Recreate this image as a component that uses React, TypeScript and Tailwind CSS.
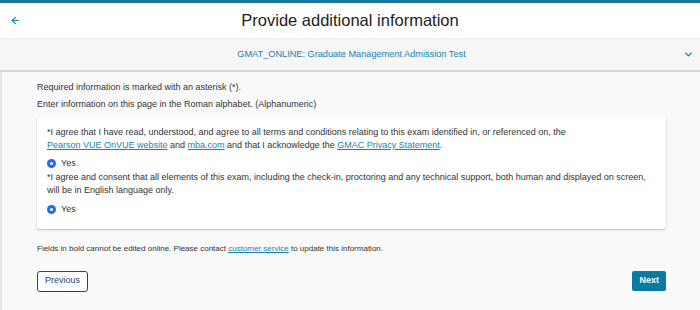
import { ArrowLeft, ChevronDown } from 'lucide-react';

function Radio({ label }: { label: string }) {
  return (
    <label className="flex h-[14px] items-center gap-[5px] text-[9px] text-[#333]">
      <span className="flex h-[9px] w-[9px] items-center justify-center rounded-full bg-[#1e6fe0]">
        <span className="h-[3px] w-[3px] rounded-full bg-white" />
      </span>
      {label}
    </label>
  );
}

function Link({ children }: { children: string }) {
  return <a className="text-[#1583b0] underline">{children}</a>;
}

export default function App() {
  return (
    <div
      className="flex h-[310px] w-[700px] flex-col overflow-hidden border-t-[3px] border-[#17789f] bg-[#fafafa]"
      style={{ fontFamily: '"Liberation Sans", Arial, sans-serif' }}
    >
      <div className="flex h-[36px] items-center border-b border-[#ececec] bg-white px-[10px]">
        <ArrowLeft className="h-[11px] w-[11px] text-[#1a86b3]" strokeWidth={2.5} />
        <h1 className="flex-1 pr-[11px] text-center text-[16.5px] text-[#222]">Provide additional information</h1>
      </div>
      <div className="flex h-[33px] items-center border-b-2 border-[#d6d6d6] bg-[#f6f6f6] pl-[20px] pr-[6px]">
        <span className="flex-1 text-center text-[9.2px] text-[#1583b0]">
          GMAT_ONLINE: Graduate Management Admission Test
        </span>
        <ChevronDown className="h-[11px] w-[11px] text-[#1583b0]" strokeWidth={3} />
      </div>
      <div className="flex flex-1 flex-col border-l-2 border-[#e4e4e4] pl-[35px] pr-[34px]">
        <p className="mt-[8.5px] text-[9px] leading-[13px] text-[#333]">
          Required information is marked with an asterisk (*).
        </p>
        <p className="mt-[4px] text-[9px] leading-[13px] text-[#333]">
          Enter information on this page in the Roman alphabet. (Alphanumeric)
        </p>
        <div className="mt-[6.5px] flex flex-col rounded-[3px] bg-white px-[10px] pt-[9px] pb-[12px] shadow-[0_1px_2px_rgba(0,0,0,0.25)]">
          <p className="text-[9px] leading-[13px] text-[#333]">
            *I agree that I have read, understood, and agree to all terms and conditions relating to this exam
            identified in, or referenced on, the
            <br />
            <Link>Pearson VUE OnVUE website</Link> and <Link>mba.com</Link> and that I acknowledge the{' '}
            <Link>GMAC Privacy Statement</Link>.
          </p>
          <div className="mt-[4.5px]">
            <Radio label="Yes" />
          </div>
          <p className="text-[9px] leading-[13px] text-[#333]">
            *I agree and consent that all elements of this exam, including the check-in, proctoring and any technical
            support, both human and displayed on screen, will be in English language only.
          </p>
          <div className="mt-[6px]">
            <Radio label="Yes" />
          </div>
        </div>
        <p className="mt-[15px] text-[8px] leading-[10px] text-[#333]">
          Fields in bold cannot be edited online. Please contact <Link>customer service</Link> to update this
          information.
        </p>
        <div className="mt-[17px] flex items-center justify-between">
          <button className="h-[21px] rounded-[3px] border-[1.5px] border-[#23466f] bg-white px-[7px] text-[9px] text-[#23466f]">
            Previous
          </button>
          <button className="h-[20px] rounded-[2px] bg-[#0b7aa3] px-[7px] text-[9px] font-bold text-white">
            Next
          </button>
        </div>
      </div>
    </div>
  );
}
